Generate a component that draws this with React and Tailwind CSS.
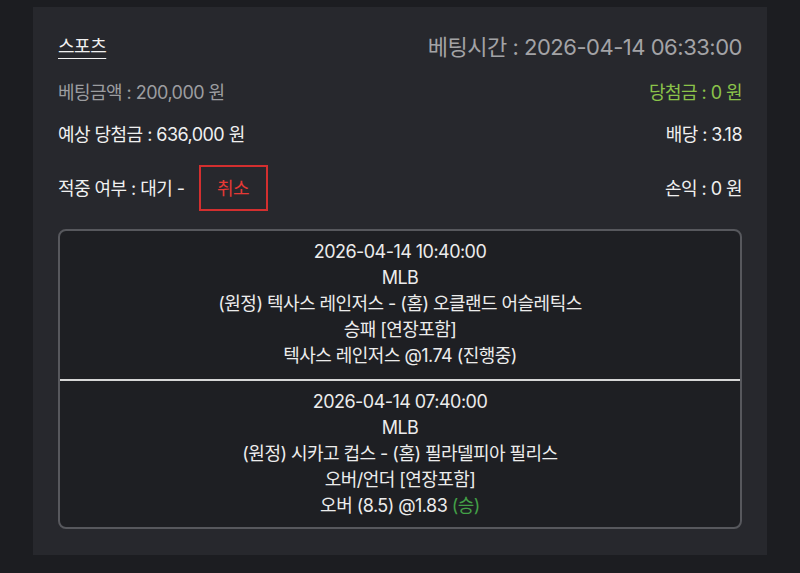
import React from "react";

const font = { fontFamily: '"Inter", "Noto Sans CJK KR", sans-serif' };

function Bet({ lines }) {
  return (
    <div className="py-[8px] flex flex-col items-center text-[18px] leading-[26px] text-[#ececec] tracking-[-0.03em]">
      {lines.map((l, i) => (
        <div key={i}>{l}</div>
      ))}
    </div>
  );
}

export default function App() {
  return (
    <div className="min-h-screen bg-[#1c1d21] pt-[7px] px-[33px]" style={font}>
      <div className="w-[734px] bg-[#27282d] pt-[28px] pb-[26px] px-[25px]">
        <div className="flex justify-between items-end h-[24px] tracking-[-0.03em]">
          <span className="text-[18px] leading-[24px] text-[#f0f0f0] underline underline-offset-[5px] decoration-1">스포츠</span>
          <span className="text-[22px] leading-[24px] text-[#a3a3a6]">베팅시간 : 2026-04-14 06:33:00</span>
        </div>
        <div className="mt-[21px] flex justify-between items-center h-[24px] text-[18px] tracking-[-0.03em]">
          <span className="text-[#9c9da0]">베팅금액 : 200,000 원</span>
          <span className="text-[#8bc34a]">당첨금 : 0 원</span>
        </div>
        <div className="mt-[18px] flex justify-between items-center h-[24px] text-[18px] text-[#f0f0f0] tracking-[-0.03em]">
          <span>예상 당첨금 : 636,000 원</span>
          <span>배당 : 3.18</span>
        </div>
        <div className="mt-[19px] flex justify-between items-center h-[46px] text-[18px] text-[#f0f0f0] tracking-[-0.03em]">
          <div className="flex items-center">
            <span>적중 여부 : 대기 -</span>
            <span className="ml-[14px] w-[69px] h-[46px] border-2 border-[#d32f2f] text-[#e53935] flex items-center justify-center">취소</span>
          </div>
          <span>손익 : 0 원</span>
        </div>
        <div className="mt-[18px] border-2 border-[#57585d] rounded-[8px] bg-[#1e1f23] overflow-hidden">
          <Bet
            lines={[
              "2026-04-14 10:40:00",
              "MLB",
              "(원정) 텍사스 레인저스 - (홈) 오클랜드 어슬레틱스",
              "승패 [연장포함]",
              "텍사스 레인저스 @1.74 (진행중)",
            ]}
          />
          <div className="h-[2px] bg-[#d6d6d6] mt-[2px]" />
          <Bet
            lines={[
              "2026-04-14 07:40:00",
              "MLB",
              "(원정) 시카고 컵스 - (홈) 필라델피아 필리스",
              "오버/언더 [연장포함]",
              <span key="x">
                오버 (8.5) @1.83 <span className="text-[#43a047]">(승)</span>
              </span>,
            ]}
          />
        </div>
      </div>
      <div className="mt-[18px] w-[734px] h-[60px] bg-[#27282d]" />
    </div>
  );
}
